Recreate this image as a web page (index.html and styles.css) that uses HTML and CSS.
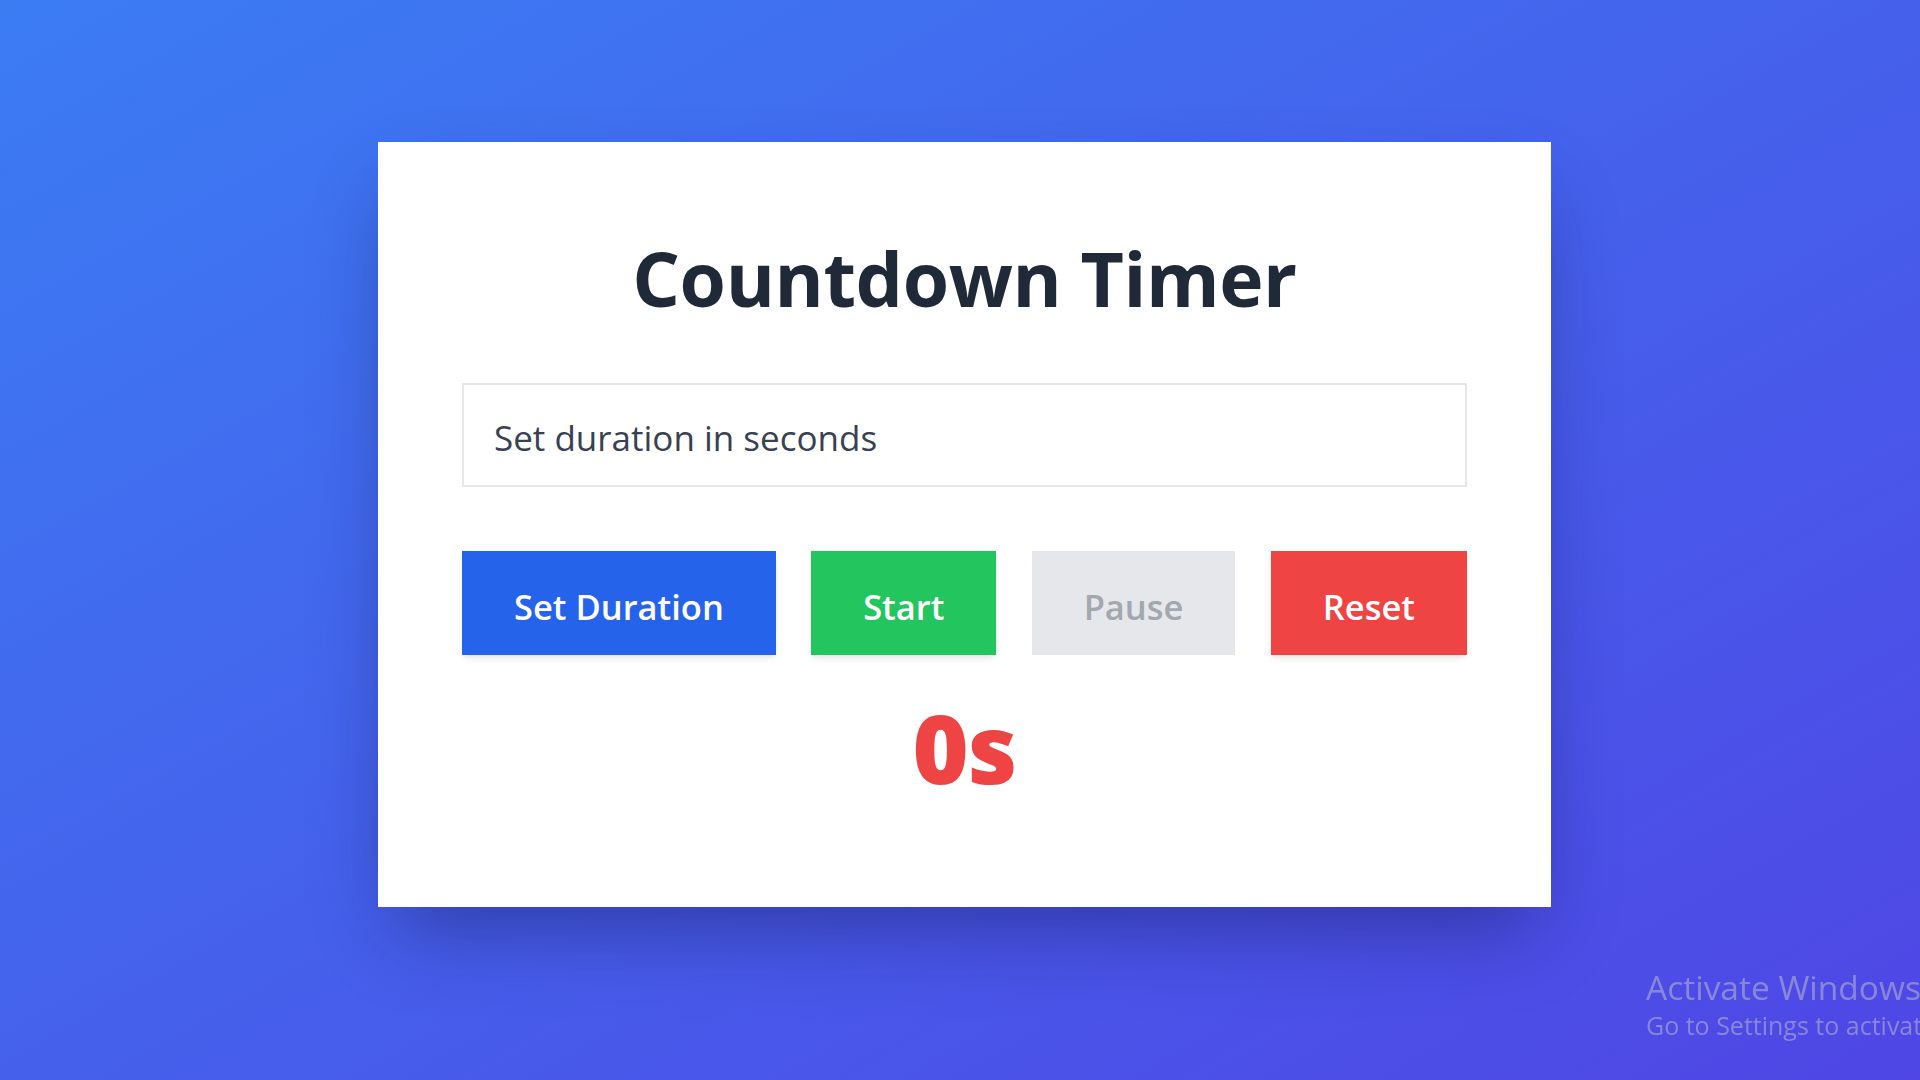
FILE: index.html
```html
<!DOCTYPE html>
<html lang="en">
<head>
<meta charset="utf-8">
<title>Countdown Timer</title>
<link rel="stylesheet" href="styles.css">
</head>
<body>
  <main class="page">
    <section class="card">
      <h1 class="title">Countdown Timer</h1>
      <input class="duration-input" type="number" placeholder="Set duration in seconds">
      <div class="controls">
        <button class="btn btn-blue">Set Duration</button>
        <button class="btn btn-green">Start</button>
        <button class="btn btn-disabled" disabled>Pause</button>
        <button class="btn btn-red">Reset</button>
      </div>
      <div class="time-left">0s</div>
    </section>
  </main>
  <div class="watermark">
    <div class="wm-title">Activate Windows</div>
    <div class="wm-sub">Go to Settings to activate Windows.</div>
  </div>
</body>
</html>
```
FILE: styles.css
```css
* { box-sizing: border-box; }

html, body {
  margin: 0;
  height: 100%;
}

body {
  font-family: "Open Sans", "Noto Sans", sans-serif;
  background: linear-gradient(to bottom right, #3b7cf3, #4f46e5);
  overflow: hidden;
}

.page {
  min-height: 100%;
  display: flex;
  justify-content: center;
  align-items: flex-start;
  padding-top: 142px;
  padding-left: 9px;
}

.card {
  width: 1173px;
  background: #ffffff;
  padding: 91px 84px 112px;
  display: flex;
  flex-direction: column;
  align-items: stretch;
  box-shadow: 0 38px 75px -18px rgba(20, 20, 80, 0.45);
}

.title {
  margin: 0 0 60px;
  text-align: center;
  font-size: 75px;
  line-height: 90px;
  font-weight: 700;
  color: #1f2937;
  letter-spacing: -0.4px;
}

.duration-input {
  width: 100%;
  height: 104px;
  border: 2px solid #e5e7eb;
  padding: 5px 30px 0;
  font-family: inherit;
  font-size: 35px;
  color: #374151;
  outline: none;
  margin: 0 0 64px;
  -moz-appearance: textfield;
}

.duration-input::placeholder {
  color: #374151;
  opacity: 1;
}

.controls {
  display: flex;
  justify-content: space-between;
  margin-bottom: 44px;
}

.btn {
  border: none;
  font-family: inherit;
  font-size: 34.5px;
  font-weight: 600;
  line-height: 52px;
  padding: 30px 52px 22px;
  color: #ffffff;
  box-shadow: 0 4px 8px -2px rgba(0, 0, 0, 0.12), 0 2px 4px -2px rgba(0, 0, 0, 0.08);
  cursor: pointer;
}

.btn-blue { background: #2563eb; }
.btn-green { background: #22c55e; }
.btn-red { background: #ef4444; }
.btn-disabled {
  background: #e5e7eb;
  color: #a3a7af;
  box-shadow: none;
  cursor: not-allowed;
}

.time-left {
  text-align: center;
  font-size: 96px;
  line-height: 96px;
  font-weight: 800;
  color: #ef4444;
  letter-spacing: -1px;
}

.watermark {
  position: fixed;
  left: 1646px;
  top: 966px;
  white-space: nowrap;
  color: rgba(195, 195, 205, 0.5);
  font-family: "Open Sans", "Noto Sans", sans-serif;
  font-weight: 400;
}

.wm-title {
  font-size: 33.5px;
  line-height: 42px;
}

.wm-sub {
  font-size: 25px;
  line-height: 34px;
}
```
